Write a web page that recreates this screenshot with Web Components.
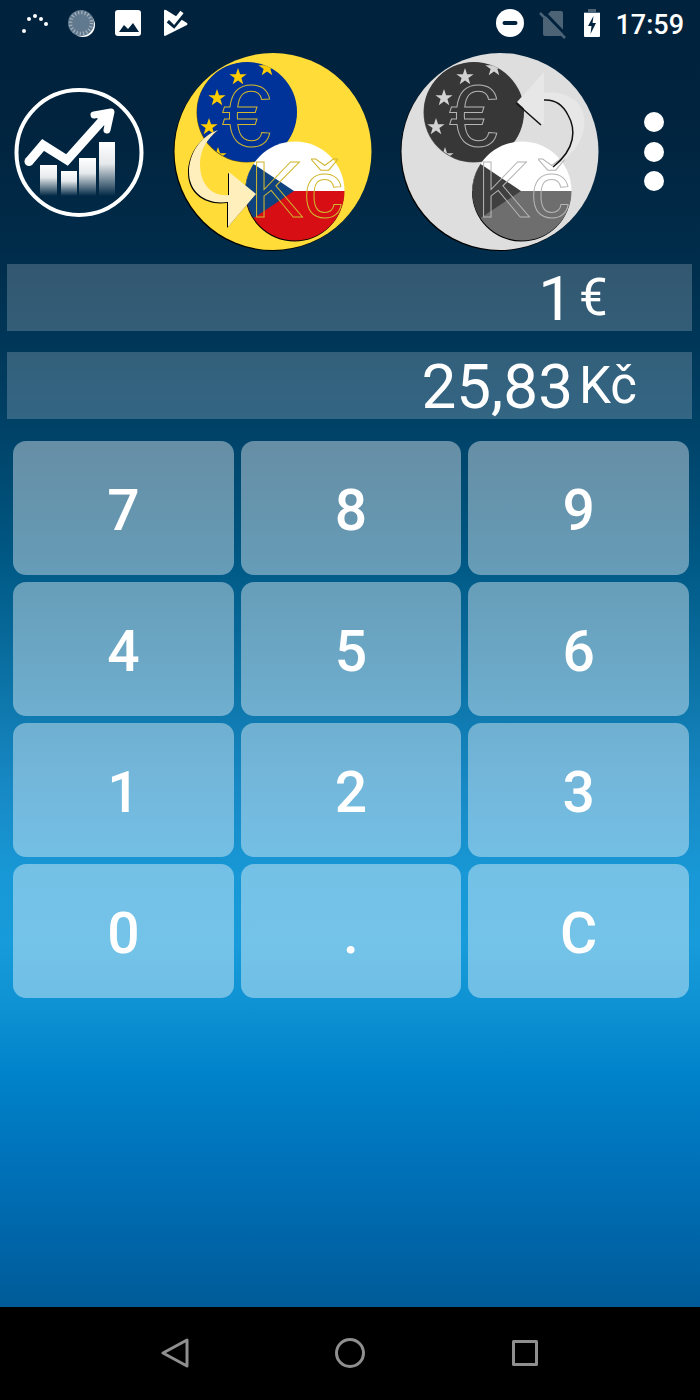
<!DOCTYPE html>
<html lang="cs">
<head>
<meta charset="utf-8">
<meta name="viewport" content="width=device-width, initial-scale=1">
<title>Currency converter</title>
<style>
  body {
    margin: 0;
    font-family: Roboto, "Noto Sans", sans-serif;
    color: #fff;
    background: #000;
  }
</style>
</head>
<body>
<converter-app></converter-app>

<script>
class StatusBar extends HTMLElement {
  connectedCallback() {
    this.attachShadow({ mode: 'open' });
    this.shadowRoot.innerHTML = `
      <style>
        :host {
          display: flex;
          justify-content: space-between;
          align-items: center;
          height: 48px;
          padding: 0 16px 0 20px;
          box-sizing: border-box;
        }
        .group {
          display: flex;
          align-items: center;
          gap: 17px;
        }
        .right { gap: 12px; }
        svg { display: block; }
        time {
          padding-top: 2px;
          font-size: 27px;
          font-weight: 500;
          line-height: 32px;
        }
      </style>
      <div class="group">
        <svg width="30" height="30" viewBox="0 0 30 30" fill="#fff">
          <circle cx="4" cy="22" r="2"/><circle cx="9" cy="10" r="2"/><circle cx="15" cy="7" r="2"/>
          <circle cx="21" cy="10" r="2"/><circle cx="26" cy="15" r="2"/>
        </svg>
        <svg width="30" height="30" viewBox="0 0 30 30">
          <circle cx="16" cy="16" r="12" fill="#fff"/>
          <circle cx="14" cy="14" r="13" fill="#60798e"/>
          <circle cx="14" cy="14" r="10.5" fill="none" stroke="#a5b2bd" stroke-width="3.5" stroke-dasharray="1.2 2.1"/>
        </svg>
        <svg width="30" height="30" viewBox="0 0 30 30">
          <rect x="1" y="1" width="26" height="26" rx="3" fill="#fff"/>
          <path d="M5 23l5-7 4 4 5-6 6 9z" fill="#01223c"/>
        </svg>
        <svg width="30" height="30" viewBox="0 0 30 30">
          <path d="M3 2v24q0 1 1 1l22-11q1-1 0-2L5 1q-2-1-2 1z" fill="#fff"/>
          <path d="M7 12l6 5L23 5" fill="none" stroke="#01223c" stroke-width="4"/>
          <path d="M9 9l4 4L21 3" fill="none" stroke="#fff" stroke-width="4"/>
        </svg>
      </div>
      <div class="group right">
        <svg width="30" height="30" viewBox="0 0 30 30">
          <circle cx="15" cy="14" r="14" fill="#fff"/>
          <path d="M9.5 14h11" stroke="#01223c" stroke-width="4" stroke-linecap="round"/>
        </svg>
        <svg width="30" height="30" viewBox="0 0 30 30">
          <path d="M14 2h10q2 0 2 2v21q0 2-2 2H8q-2 0-2-2V10z" fill="#4d6477"/>
          <path d="M6 2l24 25" stroke="#01223c" stroke-width="3"/>
          <path d="M3 4l25 25" stroke="#4d6477" stroke-width="2.5"/>
        </svg>
        <svg width="24" height="30" viewBox="0 0 24 30">
          <path d="M9 0h8v3h4v4H5V3h4z" fill="#4d6477"/>
          <path d="M5 4h16v23q0 1-1 1H6q-1 0-1-1z" fill="#fff"/>
          <path d="M14.5 7L9 17h3.500l-1 8L17 14h-3.500z" fill="#01223c"/>
        </svg>
        <time datetime="17:59">17:59</time>
      </div>
    `;
  }
}
customElements.define('status-bar', StatusBar);

class ChartIcon extends HTMLElement {
  connectedCallback() {
    this.attachShadow({ mode: 'open' });
    this.shadowRoot.innerHTML = `
      <style>
        :host { display: block; }
        svg { display: block; }
      </style>
      <svg width="134" height="134" viewBox="12 85 134 134">
        <defs>
          <linearGradient id="bar" x1="0" y1="0" x2="0" y2="1">
            <stop offset="0" stop-color="#fff"/>
            <stop offset=".4" stop-color="#fff" stop-opacity=".9"/>
            <stop offset="1" stop-color="#fff" stop-opacity="0"/>
          </linearGradient>
        </defs>
        <circle cx="79" cy="152.500" r="62.500" fill="none" stroke="#fff" stroke-width="4"/>
        <g fill="url(#bar)">
          <path d="M40 165h17v31H40z"/><path d="M61 171h16v25H61z"/>
          <path d="M79 158h17v38H79z"/><path d="M99 142h16v54H99z"/>
        </g>
        <path d="M29 161.500L43 145l24 15 42-47" fill="none" stroke="#fff" stroke-width="9"/>
        <circle cx="29" cy="161.500" r="4.500" fill="#fff"/>
        <path d="M94 115l17-3-4 18" fill="none" stroke="#fff" stroke-width="7" stroke-linecap="round" stroke-linejoin="round"/>
        <path d="M96 117l15-5-4 16z" fill="#fff"/>
      </svg>
    `;
  }
}
customElements.define('chart-icon', ChartIcon);

// Yin-yang badge with the two flags; "reverse" turns the arrow towards the euro
class ExchangeIcon extends HTMLElement {
  connectedCallback() {
    const reverse = this.hasAttribute('reverse');
    const c = reverse
      ? { disc: '#dedede', top: '#373737', star: '#d2d2d2', low: '#6e6e6e', wedge: '#3f3f3f', line: '#b5b5b5', arrow: '#e7e7e7' }
      : { disc: '#ffdc37', top: '#003399', star: '#ffcc00', low: '#d70e14', wedge: '#0f437f', line: '#d0b72f', arrow: '#ffefbd' };
    const star = 'M0-9L2.100-2.800H8.600L3.400 1.100 5.300 7.300 0 3.600-5.300 7.300-3.400 1.100-8.600-2.800H-2.100Z';
    const down = 'M53 85C34 92 24 110 24 127C24 148 42 160 63 157V182L91 149L64 127V150C44 152 35 136 35 119C35 105 42 94 53 85Z';
    const arrow = reverse
      ? `<path d="M125 57L152 27V48C186 44 202 70 187 98Q177 114 161 122C184 104 184 84 176 70Q168 54 152 55V79L149 79Z" fill="${c.arrow}"/>
         <path d="M152 55Q168 54 176 70C184 84 184 104 161 122M149 80L124 58" fill="none" stroke="#111" stroke-width="1.500"/>`
      : `<path d="${down}" transform="translate(-1 1)" fill="#000"/>
         <path d="${down}" fill="${c.arrow}"/>`;
    this.attachShadow({ mode: 'open' });
    this.shadowRoot.innerHTML = `
      <style>
        :host { display: block; }
        svg { display: block; }
        text {
          font-family: "Liberation Sans", Arial, sans-serif;
          fill: none;
          stroke: ${c.line};
          stroke-width: 1px;
        }
      </style>
      <svg width="206" height="206" viewBox="5 4 206 206">
        <defs>
          <clipPath id="eu"><circle cx="82" cy="67" r="50"/></clipPath>
          <clipPath id="cz"><circle cx="130" cy="146" r="49.500"/></clipPath>
        </defs>
        <circle cx="107" cy="107.500" r="98.500" fill="#000"/>
        <circle cx="108" cy="106.500" r="98.500" fill="${c.disc}"/>
        <circle cx="81.500" cy="67.500" r="50" fill="#000" opacity=".6"/>
        <g clip-path="url(#eu)">
          <rect x="30" y="15" width="104" height="104" fill="${c.top}"/>
          <g fill="${c.star}">
            <path d="${star}" transform="translate(73 32)"/>
            <path d="${star}" transform="translate(102 23)"/>
            <path d="${star}" transform="translate(52 53)"/>
            <path d="${star}" transform="translate(44 82)"/>
            <path d="${star}" transform="translate(53 111)"/>
          </g>
        </g>
        <circle cx="129.500" cy="147" r="49.500" fill="#000"/>
        <g clip-path="url(#cz)">
          <rect x="80" y="96" width="100" height="50" fill="#fff"/>
          <rect x="80" y="146" width="100" height="50" fill="${c.low}"/>
          <path d="M129 146L75 110v72z" fill="${c.wedge}"/>
        </g>
        <text x="57" y="101" font-size="88">€</text>
        <text x="85" y="172" font-size="80">Kč</text>
        ${arrow}
      </svg>
    `;
  }
}
customElements.define('exchange-icon', ExchangeIcon);

class ToolBar extends HTMLElement {
  connectedCallback() {
    this.attachShadow({ mode: 'open' });
    this.shadowRoot.innerHTML = `
      <style>
        :host {
          display: grid;
          grid-template-columns: 158fr 230fr 224fr 84fr;
          align-items: center;
          justify-items: center;
          height: 208px;
          padding-right: 4px;
        }
        button {
          display: block;
          padding: 0;
          border: 0;
          background: none;
          color: inherit;
          cursor: pointer;
        }
        svg { display: block; }
      </style>
      <button type="button" aria-label="Chart"><chart-icon></chart-icon></button>
      <button type="button" aria-label="Euro to koruna"><exchange-icon></exchange-icon></button>
      <button type="button" aria-label="Koruna to euro"><exchange-icon reverse></exchange-icon></button>
      <button type="button" aria-label="Menu">
        <svg width="24" height="84" viewBox="0 0 24 84" fill="#fff">
          <circle cx="12" cy="12" r="10"/><circle cx="12" cy="42" r="10"/><circle cx="12" cy="71" r="10"/>
        </svg>
      </button>
    `;
  }
}
customElements.define('tool-bar', ToolBar);

class AmountField extends HTMLElement {
  connectedCallback() {
    this.attachShadow({ mode: 'open' });
    this.shadowRoot.innerHTML = `
      <style>
        :host {
          display: grid;
          grid-template-columns: 1fr 113px;
          column-gap: 6px;
          align-items: center;
          height: 67px;
          background: rgba(255, 255, 255, .2);
        }
        output {
          padding-top: 2px;
          text-align: right;
          font-size: 62px;
          line-height: 65px;
        }
        .unit {
          font-size: 51px;
          line-height: 64px;
        }
      </style>
      <output><slot></slot></output>
      <span class="unit"><slot name="unit"></slot></span>
    `;
  }
}
customElements.define('amount-field', AmountField);

class KeyPad extends HTMLElement {
  connectedCallback() {
    const keys = ['7', '8', '9', '4', '5', '6', '1', '2', '3', '0', '.', 'C'];
    this.attachShadow({ mode: 'open' });
    this.shadowRoot.innerHTML = `
      <style>
        :host {
          display: grid;
          grid-template-columns: repeat(3, 1fr);
          grid-auto-rows: 134px;
          gap: 7px;
          padding: 0 11px 0 13px;
        }
        button {
          padding: 6px 0 0;
          border: 0;
          border-radius: 13px;
          background: rgba(255, 255, 255, .4);
          color: #fff;
          font: 500 57px/68px Roboto, sans-serif;
          cursor: pointer;
        }
      </style>
      ${keys.map(key => `<button type="button">${key}</button>`).join('')}
    `;
  }
}
customElements.define('key-pad', KeyPad);

class NavBar extends HTMLElement {
  connectedCallback() {
    this.attachShadow({ mode: 'open' });
    this.shadowRoot.innerHTML = `
      <style>
        :host {
          display: grid;
          grid-template-columns: repeat(3, 25%);
          justify-content: center;
          align-items: center;
          justify-items: center;
          height: 93px;
          background: #000;
        }
        button {
          padding: 0;
          border: 0;
          background: none;
          cursor: pointer;
        }
        svg {
          display: block;
          fill: none;
          stroke: #8f8f8f;
          stroke-width: 3px;
          stroke-linejoin: round;
        }
      </style>
      <button type="button" aria-label="Back"><svg width="32" height="32" viewBox="0 0 32 32"><path d="M28 2v26L4 15z"/></svg></button>
      <button type="button" aria-label="Home"><svg width="32" height="32" viewBox="0 0 32 32"><circle cx="16" cy="15" r="13.500"/></svg></button>
      <button type="button" aria-label="Recent apps"><svg width="32" height="32" viewBox="0 0 32 32"><path d="M4.500 3.500h23v23h-23z"/></svg></button>
    `;
  }
}
customElements.define('nav-bar', NavBar);

class ConverterApp extends HTMLElement {
  connectedCallback() {
    this.attachShadow({ mode: 'open' });
    this.shadowRoot.innerHTML = `
      <style>
        :host {
          display: flex;
          flex-direction: column;
          min-height: 100vh;
        }
        main {
          flex: 1;
          background: linear-gradient(#01223c 0%, #01233e 9%, #002c4a 19%, #00385a 27%, #004268 33%,
            #005985 43%, #0d75a9 53%, #1788c4 60%, #1898d6 67%, #189bda 72%, #0f92d3 77%,
            #0083ca 82%, #0074bc 88%, #0067ab 94%, #005b98 100%);
        }
        .amounts {
          display: grid;
          gap: 21px;
          padding: 8px 8px 22px 7px;
        }
      </style>
      <main>
        <status-bar></status-bar>
        <tool-bar></tool-bar>
        <div class="amounts">
          <amount-field>1<span slot="unit">€</span></amount-field>
          <amount-field>25,83<span slot="unit">Kč</span></amount-field>
        </div>
        <key-pad></key-pad>
      </main>
      <nav-bar></nav-bar>
    `;
  }
}
customElements.define('converter-app', ConverterApp);
</script>
</body>
</html>
